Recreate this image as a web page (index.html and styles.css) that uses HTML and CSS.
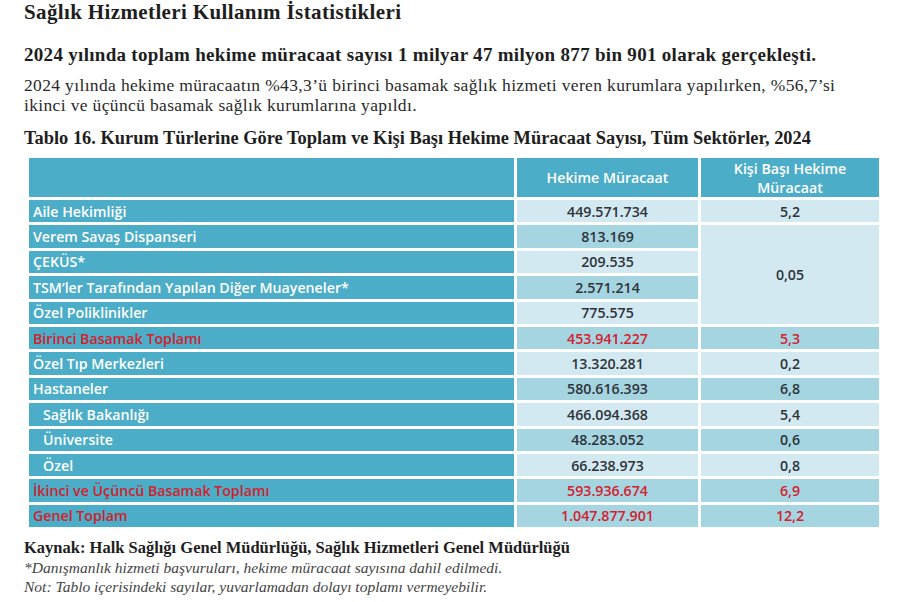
FILE: index.html
```html
<!DOCTYPE html>
<html lang="tr">
<head>
<meta charset="utf-8">
<title>Sağlık Hizmetleri Kullanım İstatistikleri</title>
<link rel="stylesheet" href="styles.css">
</head>
<body>
<div class="page">
  <h1 class="title">Sağlık Hizmetleri Kullanım İstatistikleri</h1>
  <p class="lead">2024 yılında toplam hekime müracaat sayısı 1 milyar 47 milyon 877 bin 901 olarak gerçekleşti.</p>
  <p class="desc">2024 yılında hekime müracaatın %43,3’ü birinci basamak sağlık hizmeti veren kurumlara yapılırken, %56,7’si ikinci ve üçüncü basamak sağlık kurumlarına yapıldı.</p>
  <p class="caption">Tablo 16. Kurum Türlerine Göre Toplam ve Kişi Başı Hekime Müracaat Sayısı, Tüm Sektörler, 2024</p>
  <table class="stats">
    <colgroup><col class="c1"><col class="c2"><col class="c3"></colgroup>
    <thead>
      <tr class="head"><th></th><th>Hekime Müracaat</th><th>Kişi Başı Hekime<br>Müracaat</th></tr>
    </thead>
    <tbody>
      <tr><td class="lbl">Aile Hekimliği</td><td class="lt">449.571.734</td><td class="lt">5,2</td></tr>
      <tr><td class="lbl">Verem Savaş Dispanseri</td><td class="md">813.169</td><td class="lt" rowspan="4">0,05</td></tr>
      <tr><td class="lbl">ÇEKÜS*</td><td class="lt">209.535</td></tr>
      <tr><td class="lbl">TSM’ler Tarafından Yapılan Diğer Muayeneler*</td><td class="md">2.571.214</td></tr>
      <tr><td class="lbl">Özel Poliklinikler</td><td class="lt">775.575</td></tr>
      <tr class="total"><td class="lbl">Birinci Basamak Toplamı</td><td class="md">453.941.227</td><td class="md">5,3</td></tr>
      <tr><td class="lbl">Özel Tıp Merkezleri</td><td class="lt">13.320.281</td><td class="lt">0,2</td></tr>
      <tr><td class="lbl">Hastaneler</td><td class="md">580.616.393</td><td class="md">6,8</td></tr>
      <tr><td class="lbl sub">Sağlık Bakanlığı</td><td class="lt">466.094.368</td><td class="lt">5,4</td></tr>
      <tr><td class="lbl sub">Üniversite</td><td class="md">48.283.052</td><td class="md">0,6</td></tr>
      <tr><td class="lbl sub">Özel</td><td class="lt">66.238.973</td><td class="lt">0,8</td></tr>
      <tr class="total"><td class="lbl">İkinci ve Üçüncü Basamak Toplamı</td><td class="md">593.936.674</td><td class="md">6,9</td></tr>
      <tr class="total"><td class="lbl">Genel Toplam</td><td class="md">1.047.877.901</td><td class="md">12,2</td></tr>
    </tbody>
  </table>
  <p class="source">Kaynak: Halk Sağlığı Genel Müdürlüğü, Sağlık Hizmetleri Genel Müdürlüğü</p>
  <p class="note">*Danışmanlık hizmeti başvuruları, hekime müracaat sayısına dahil edilmedi.</p>
  <p class="note">Not: Tablo içerisindeki sayılar, yuvarlamadan dolayı toplamı vermeyebilir.</p>
</div>
</body>
</html>
```
FILE: styles.css
```css
html, body {
  margin: 0;
  padding: 0;
  background: #ffffff;
}
.page {
  padding: 0 0 0 24px;
  font-family: "Liberation Serif", "Times New Roman", serif;
  color: #1e1e1e;
}
.title {
  margin: 0;
  font-size: 21px;
  line-height: 24px;
  letter-spacing: 0.37px;
  font-weight: bold;
}
.lead {
  margin: 19px 0 0;
  font-size: 19px;
  line-height: 24px;
  letter-spacing: 0.3px;
  font-weight: bold;
}
.desc {
  margin: 8px 0 0;
  width: 850px;
  font-size: 17.5px;
  line-height: 20px;
  letter-spacing: 0.35px;
  color: #2a2a2a;
}
.caption {
  margin: 12px 0 0;
  font-size: 18.4px;
  line-height: 22px;
  font-weight: bold;
}
.stats {
  margin: 6px 0 0 2px;
  border-collapse: separate;
  border-spacing: 3px 3px;
  font-family: "Open Sans", "DejaVu Sans", sans-serif;
  font-weight: 600;
  font-size: 14.2px;
  color: #2e3338;
}
.c1 { width: 485px; }
.c2 { width: 181px; }
.c3 { width: 178px; }
.stats th {
  background: #4badc7;
  color: #ffffff;
  font-weight: 600;
  height: 39px;
  padding: 0;
  line-height: 19px;
  text-align: center;
  vertical-align: middle;
}
.stats td {
  height: 22.4px;
  padding: 1px 0 0;
  box-sizing: border-box;
  text-align: center;
  vertical-align: middle;
  line-height: 18px;
}
.stats td.lbl {
  background: #4badc7;
  color: #ffffff;
  text-align: left;
  padding-left: 4px;
}
.stats td.sub { padding-left: 14px; }
.stats td.lt { background: #d3e9f1; }
.stats td.md { background: #a6d5e2; }
.stats tr.total td { color: #d4202c; }
.source {
  margin: 8px 0 0;
  font-size: 16.5px;
  line-height: 20px;
  font-weight: bold;
}
.note {
  margin: 0;
  font-size: 15.5px;
  line-height: 19px;
  font-style: italic;
  color: #444444;
}
```
